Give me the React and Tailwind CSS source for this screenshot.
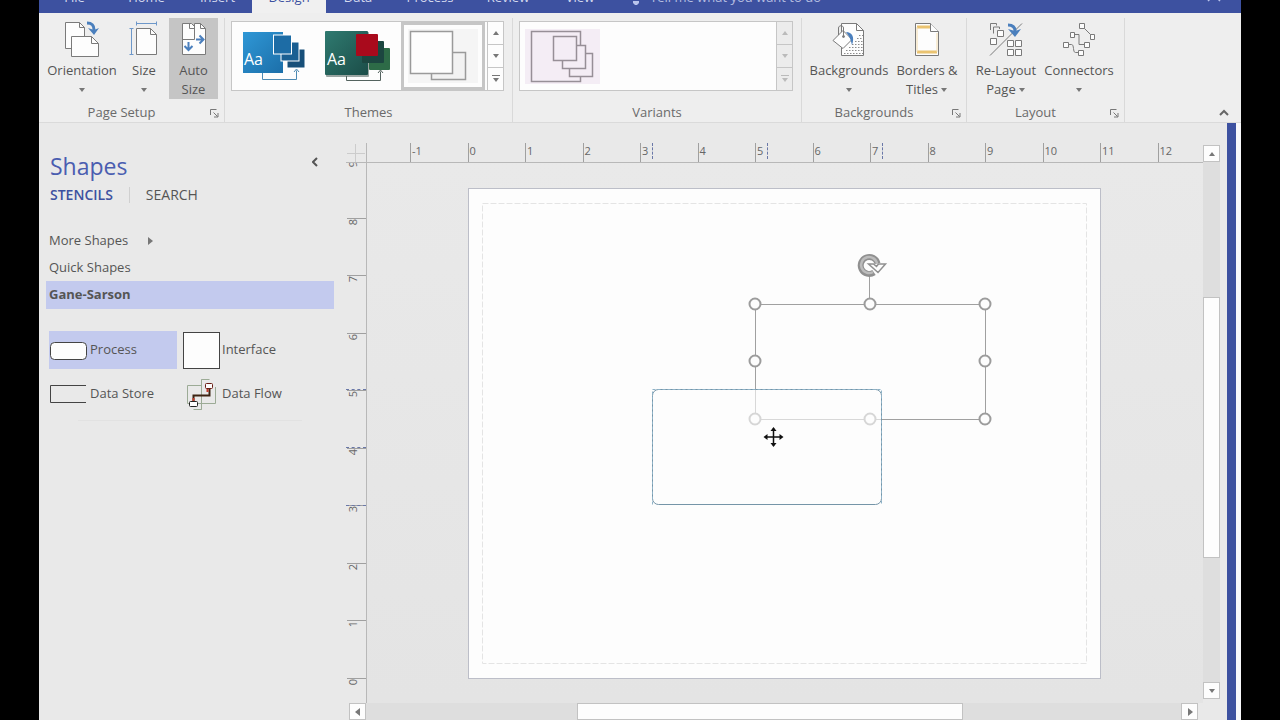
function Caret({ dir = 'down', className = 'fill-[#777777]' }) {
  const points = {
    down: '1,2 7,2 4,6',
    up: '1,6 7,6 4,2',
    right: '2,0 7,4 2,8',
    left: '6,0 1,4 6,8',
  }
  return (
    <svg className={`w-2 h-2 shrink-0 ${className}`} viewBox="0 0 8 8">
      <polygon points={points[dir]} />
    </svg>
  )
}

function OrientationIcon() {
  return (
    <svg width="36" height="40" viewBox="0 0 36 40" fill="none" stroke="#7a7a7a">
      <path d="M1.500 4.500h14l5 5v21h-19z" fill="#fdfdfd" />
      <path d="M15.500 4.500v5h5" />
      <path d="M7.500 18.500h20l7 7v13h-27z" fill="#fdfdfd" />
      <path d="M27.500 18.500v7h7" />
      <path d="M23 5c5 0 7 2 7 7" stroke="#4a7fbd" strokeWidth="3" />
      <path d="M24 10l6 2 5-2-5 7z" fill="#4a7fbd" stroke="none" />
    </svg>
  )
}

function SizeIcon() {
  return (
    <svg width="30" height="40" viewBox="0 0 30 40" fill="none" stroke="#7a7a7a">
      <path d="M7.500 10.500h14l6 6v20h-20z" fill="#fdfdfd" />
      <path d="M21.500 10.500v6h6" />
      <path d="M7 5.500h21M7.500 3.500v4M27.500 3.500v4M2.500 10v27M.5 10.500h4M.5 36.500h4" stroke="#6d97c9" />
    </svg>
  )
}

function AutoSizeIcon() {
  return (
    <svg width="28" height="40" viewBox="0 0 28 40" fill="none" stroke="#7a7a7a">
      <path d="M2.500 5.500h9l3 3v-3h6l5 5v26h-23z" fill="#fdfdfd" />
      <path d="M9.500 5.500v5h5M14.500 8v13.500h-12M20.500 5.500v5h5" />
      <path d="M16 21.500h7M19.500 17.500l4 4-4 4M8.500 24v7M4.500 28l4 4 4-4" stroke="#4a7fbd" strokeWidth="2" />
    </svg>
  )
}

function BackgroundsIcon() {
  return (
    <svg width="34" height="40" viewBox="0 0 34 40" fill="none" stroke="#7a7a7a">
      <path d="M9.500 5.500h15l7 7v25h-22z" fill="#fdfdfd" />
      <path d="M24.500 5.500v7h7" />
      <path
        d="M12 35.500h19M14 32.500h17M17 29.500h14M20 26.500h11M23 23.500h8M25 20.500h6M27 17.500h4"
        stroke="#8c8c8c"
        strokeDasharray="1.500 1.500"
      />
      <path d="M1 22.500l10-10 9 9-9 9z" fill="#fdfdfd" />
      <path d="M11.500 18v-8c0-3-5-3-5 0v7" />
      <circle cx="11.500" cy="18.500" r="1" fill="#7a7a7a" />
      <path d="M14 14c6 0 9 5 6 13-1-3-1-7-6-13z" fill="#4a7fbd" stroke="none" />
    </svg>
  )
}

function BordersIcon() {
  return (
    <svg width="26" height="40" viewBox="0 0 26 40" fill="none" stroke="#7a7a7a">
      <path d="M1.500 5.500h15l8 8v24h-23z" fill="#fdfdfd" />
      <path d="M3 9h13M3 34h20" stroke="#eac371" strokeWidth="3" />
      <path d="M3 9v25M23 15v19" stroke="#f3dcae" />
      <path d="M16.500 5.500v8h8" fill="#fdfdfd" />
    </svg>
  )
}

function RelayoutIcon() {
  return (
    <svg width="34" height="40" viewBox="0 0 34 40" fill="none" stroke="#7a7a7a">
      <path d="M1.500 12v-6.500h6v2M4.500 15.500v-6.500h6v2" />
      <path d="M8.500 12.500h6v6h-6zM1.500 20.500h6v6h-6z" fill="#fdfdfd" />
      <path d="M1 37.500l32-32" />
      <path d="M18.500 22.500h6v6h-6zM26.500 22.500h6v6h-6zM18.500 31.500h6v6h-6zM26.500 31.500h6v6h-6z" fill="#fdfdfd" />
      <path d="M19 7c5 0 7 2 7 6" stroke="#4a7fbd" strokeWidth="3" />
      <path d="M19 11l7 2 6-2-6 8z" fill="#4a7fbd" stroke="none" />
    </svg>
  )
}

function ConnectorsIcon() {
  return (
    <svg width="34" height="40" viewBox="0 0 34 40" fill="none" stroke="#7a7a7a">
      <path d="M22 10l7 7M12 16.500h5v10h5M6 26.500h3.500c3 0 1 8 4 8h3" />
      <path
        d="M17.500 5.500h5v5h-5zM28.500 16.500h4v5h-4zM8.500 14.500h4v5h-4zM22.500 24.500h5v5h-5zM1.500 24.500h5v5h-5zM16.500 32.500h5v5h-5z"
        fill="#fdfdfd"
      />
    </svg>
  )
}

function BlueTheme() {
  return (
    <svg width="66" height="54" viewBox="0 0 66 54">
      <defs>
        <linearGradient id="blue" x1="0" y1="0" x2="1" y2="1">
          <stop offset="0" stopColor="#2f97d6" />
          <stop offset="1" stopColor="#1c6fa9" />
        </linearGradient>
      </defs>
      <rect x="1" y="3" width="40" height="41" fill="url(#blue)" />
      <path d="M20.500 44v6.500h34v-9M52 43l2.500-3 2.500 3" fill="none" stroke="#4d8ab3" />
      <rect x="45" y="20" width="18" height="19" fill="#174f79" stroke="#fff" />
      <rect x="39" y="13" width="18" height="19" fill="#1a5f92" stroke="#fff" />
      <rect x="31.500" y="6" width="18" height="19" fill="#1d6ca5" stroke="#fff" />
      <text x="2" y="36" className="fill-white text-base">Aa</text>
    </svg>
  )
}

function GreenTheme() {
  return (
    <svg width="70" height="54" viewBox="0 0 70 54">
      <defs>
        <linearGradient id="green" x1="0" y1="0" x2="1" y2="1">
          <stop offset="0" stopColor="#2f7a70" />
          <stop offset="1" stopColor="#1b4d48" />
        </linearGradient>
      </defs>
      <rect x="4" y="3" width="43" height="45" rx="1" fill="#9aa5a2" />
      <rect x="3" y="2" width="43" height="44" rx="1" fill="url(#green)" />
      <path d="M24.500 47v4.500h34v-9M56 44l2.500-3 2.500 3" fill="none" stroke="#54635f" />
      <rect x="47" y="19" width="21" height="22" rx="1" fill="#2d6b47" />
      <rect x="40" y="12" width="22" height="22" rx="1" fill="#1c4640" />
      <rect x="34" y="5" width="22" height="22" rx="1" fill="#a90a1c" />
      <text x="5" y="36" className="fill-white text-base">Aa</text>
    </svg>
  )
}

function PlainTheme() {
  return (
    <svg width="70" height="54" viewBox="0 0 70 54" stroke="#9a9a9a" strokeWidth="1.500" fill="#fdfdfd">
      <rect x="23.500" y="23.500" width="34" height="27" fill="#f2f2f2" />
      <rect x="2.500" y="2.500" width="42" height="42" />
    </svg>
  )
}

function VariantPreview() {
  return (
    <svg width="75" height="55" viewBox="0 0 75 55" stroke="#978f97" strokeWidth="1.500" fill="#f4edf5">
      <rect width="75" height="55" stroke="none" />
      <rect x="6.500" y="2.500" width="49" height="50" />
      <rect x="44.500" y="24.500" width="23" height="23" />
      <rect x="37.500" y="16.500" width="23" height="23" />
      <rect x="28.500" y="7.500" width="23" height="24" />
    </svg>
  )
}

function RibbonGroup({ label, launcher, className, children }) {
  return (
    <section className={`flex flex-col h-[104px] border-r border-[#d9d9d9] ${className}`}>
      <div className="flex h-[81px]">{children}</div>
      <div className="flex items-center mt-[5px] h-[18px] text-[#6a6a6a]">
        <h2 className="flex-1 text-center">{label}</h2>
        {launcher && (
          <button aria-label={`${label} options`} className="w-5 flex justify-center">
            <svg width="9" height="9" viewBox="0 0 9 9" fill="none" stroke="#777777">
              <path d="M.5 6v-5.500h6M3.500 3.500l4 4M8 4v4h-4" />
            </svg>
          </button>
        )}
      </div>
    </section>
  )
}

function RibbonButton({ icon, line1, line2, menu, active, className }) {
  return (
    <button
      className={`h-[81px] flex flex-col items-center shrink-0 leading-[19px] whitespace-nowrap ${active ? 'bg-[#c5c5c5]' : ''} ${className}`}
    >
      <span className="h-[43px]">{icon}</span>
      <span>{line1}</span>
      <span className="flex items-center gap-0.5 h-[19px]">
        {line2}
        {menu && <Caret />}
      </span>
    </button>
  )
}

function Gallery({ disabled, children }) {
  return (
    <div className="flex flex-1 h-[70px] mt-[3px] ml-1.5 mr-2 border border-[#c6c6c6] bg-[#fdfdfd]">
      <div className="flex flex-1 items-center">{children}</div>
      <div className={`flex flex-col w-4 border-l border-[#c6c6c6] divide-y divide-[#c6c6c6] ${disabled ? 'bg-[#ececec]' : ''}`}>
        <button aria-label="Scroll up" disabled={disabled} className="flex-1 flex items-center justify-center">
          <Caret dir="up" className={disabled ? 'fill-[#bbbbbb]' : 'fill-[#777777]'} />
        </button>
        <button aria-label="Scroll down" disabled={disabled} className="flex-1 flex items-center justify-center">
          <Caret className={disabled ? 'fill-[#bbbbbb]' : 'fill-[#777777]'} />
        </button>
        <button aria-label="More" disabled={disabled} className="flex-1 flex flex-col items-center justify-center">
          <span className={`w-2 h-px ${disabled ? 'bg-[#bbbbbb]' : 'bg-[#777777]'}`}></span>
          <Caret className={disabled ? 'fill-[#bbbbbb]' : 'fill-[#777777]'} />
        </button>
      </div>
    </div>
  )
}

function TabBar() {
  const tab = 'h-8 shrink-0 text-center'
  return (
    <nav className="flex items-end h-[13px] overflow-hidden bg-[#3d51a0] text-[#d5daef] leading-8">
      <button className={`${tab} w-[71px]`}>File</button>
      <button className={`${tab} w-[73px]`}>Home</button>
      <button className={`${tab} w-[69px]`}>Insert</button>
      <button className={`${tab} w-[74px] bg-[#f0f0f0] text-[#3d51a0]`}>Design</button>
      <button className={`${tab} w-[64px]`}>Data</button>
      <button className={`${tab} w-[80px]`}>Process</button>
      <button className={`${tab} w-[76px]`}>Review</button>
      <button className={`${tab} w-[68px]`}>View</button>
      <button className="h-8 ml-4 flex items-center gap-2 text-[#b5bee0]">
        <svg width="12" height="18" viewBox="0 0 12 18" fill="#b9c4ec">
          <path d="M6 1a5 5 0 0 0-3 9v2h6v-2a5 5 0 0 0-3-9zM3 13h6v2l-2 2H5l-2-2z" />
        </svg>
        Tell me what you want to do
      </button>
      <button aria-label="Account" className="h-8 ml-auto mr-5 flex items-center">
        <svg width="14" height="18" viewBox="0 0 14 18" fill="none" stroke="#b9c4ec" strokeWidth="1.500">
          <circle cx="7" cy="4" r="3" />
          <path d="M1 13l3-3h6l3 3" />
        </svg>
      </button>
    </nav>
  )
}

function Ribbon() {
  return (
    <div className="flex h-[110px] pt-[5px] bg-[#eeeeee] border-b border-[#dadada]">
      <RibbonGroup label="Page Setup" launcher className="w-[186px]">
        <div className="flex gap-[7px] pl-1.5">
          <RibbonButton icon={<OrientationIcon />} line1="Orientation" menu className="w-[74px]" />
          <RibbonButton icon={<SizeIcon />} line1="Size" menu className="w-9" />
          <RibbonButton icon={<AutoSizeIcon />} line1="Auto" line2="Size" active className="w-[49px]" />
        </div>
      </RibbonGroup>
      <RibbonGroup label="Themes" className="w-[288px]">
        <Gallery>
          <button aria-label="Blue theme" className="ml-2.5">
            <BlueTheme />
          </button>
          <button aria-label="Green theme" className="ml-3.5">
            <GreenTheme />
          </button>
          <button aria-label="Plain theme" className="ml-auto mr-0.5 p-1 bg-[#fdfdfd] border-3 border-[#c6c6c6]">
            <span className="block bg-[#f5f5f5]">
              <PlainTheme />
            </span>
          </button>
        </Gallery>
      </RibbonGroup>
      <RibbonGroup label="Variants" className="w-[289px]">
        <Gallery disabled>
          <button aria-label="Variant 1" className="ml-[5px]">
            <VariantPreview />
          </button>
        </Gallery>
      </RibbonGroup>
      <RibbonGroup label="Backgrounds" launcher className="w-[165px]">
        <div className="flex pl-1">
          <RibbonButton icon={<BackgroundsIcon />} line1="Backgrounds" menu className="w-[86px]" />
          <RibbonButton icon={<BordersIcon />} line1="Borders &" line2="Titles" menu className="w-[70px]" />
        </div>
      </RibbonGroup>
      <RibbonGroup label="Layout" launcher className="w-[158px]">
        <div className="flex pl-[3px]">
          <RibbonButton icon={<RelayoutIcon />} line1="Re-Layout" line2="Page" menu className="w-[72px]" />
          <RibbonButton icon={<ConnectorsIcon />} line1="Connectors" menu className="w-[74px]" />
        </div>
      </RibbonGroup>
      <button aria-label="Collapse ribbon" className="self-end ml-auto mr-3 mb-1.5">
        <svg width="10" height="7" viewBox="0 0 10 7" fill="none" stroke="#666666" strokeWidth="2">
          <path d="M1 6l4-4 4 4" />
        </svg>
      </button>
    </div>
  )
}

function ShapesPanel() {
  const item = 'flex items-center h-[38px] text-left'
  return (
    <aside className="w-[307px] shrink-0 pt-7 pl-[7px] pr-3">
      <div className="flex justify-between h-[30px] pl-1 pr-[15px]">
        <h1 className="text-[23px] leading-[30px] text-[#4a5db0]">Shapes</h1>
        <button aria-label="Minimize shapes window" className="self-start mt-1.5">
          <svg width="7" height="10" viewBox="0 0 7 10" fill="none" stroke="#555555" strokeWidth="2">
            <path d="M5 1l-4 4 4 4" />
          </svg>
        </button>
      </div>
      <div className="flex items-center h-7 pl-1 text-sm">
        <button className="font-semibold text-[#3d51a0]">STENCILS</button>
        <span className="w-px h-4 mx-4 bg-[#d0d0d0]"></span>
        <button>SEARCH</button>
      </div>
      <ul className="mt-[18px]">
        <li>
          <button className="flex items-center gap-[18px] h-[27px] pl-[3px]">
            More Shapes <Caret dir="right" />
          </button>
        </li>
        <li>
          <button className="h-[27px] pl-[3px]">Quick Shapes</button>
        </li>
        <li>
          <button className="w-full h-7 pl-[3px] text-left font-bold bg-[#c3caee]">Gane-Sarson</button>
        </li>
      </ul>
      <div className="grid grid-cols-[128px_128px] gap-1.5 mt-[22px] pl-[3px]">
        <button className={`${item} gap-[3px] bg-[#c3caee]`}>
          <svg width="38" height="38" viewBox="0 0 38 38" fill="#fdfdfd" stroke="#444444">
            <rect x="1.500" y="11.500" width="36" height="17" rx="4" />
          </svg>
          Process
        </button>
        <button className={`${item} gap-px`}>
          <svg width="38" height="38" viewBox="0 0 38 38" fill="#fdfdfd" stroke="#444444">
            <rect x=".5" y="1.500" width="36" height="36" />
          </svg>
          Interface
        </button>
        <button className={`${item} gap-[3px]`}>
          <svg width="38" height="38" viewBox="0 0 38 38" fill="none" stroke="#444444">
            <path d="M37 10.500h-35.500v17h35.500" />
          </svg>
          Data Store
        </button>
        <button className={`${item} gap-px`}>
          <svg width="38" height="38" viewBox="0 0 38 38" fill="none">
            <path d="M4.500 10.500h14v-6h8M4.500 10.500v18h14v6h-8M18.500 4.500v30M32.500 12v16.500h-14" stroke="#9cab96" />
            <path d="M26.500 13v7.500h-16v6" stroke="#3d2412" strokeWidth="2" />
            <path d="M24.500 13v4M10.500 23v4" stroke="#c23b2b" strokeWidth="2" />
            <rect x="22.500" y="8.500" width="7" height="5" rx="1" fill="#fdfdfd" stroke="#6b1d14" />
            <rect x="6.500" y="26.500" width="8" height="5" rx="1" fill="#fdfdfd" stroke="#222222" />
          </svg>
          Data Flow
        </button>
      </div>
      <div className="mt-[7px] mx-8 h-px bg-[#e2e2e2]"></div>
    </aside>
  )
}

function HorizontalRuler() {
  const inches = [-1, 0, 1, 2, 3, 4, 5, 6, 7, 8, 9, 10, 11, 12]
  return (
    <div className="relative overflow-hidden border-b border-[#b8b8b8] text-[11px] leading-4 text-[#666666]">
      <div className="grid grid-cols-14 w-[805px] h-full ml-[43px]">
        {inches.map((n) => (
          <span key={n} className="pl-px border-l border-[#a0a0a0]">{n}</span>
        ))}
      </div>
      <span className="absolute top-0 left-[285px] h-4 border-l border-dashed border-[#6a78a8]"></span>
      <span className="absolute top-0 left-[400px] h-4 border-l border-dashed border-[#6a78a8]"></span>
      <span className="absolute top-0 left-[515px] h-4 border-l border-dashed border-[#6a78a8]"></span>
    </div>
  )
}

function VerticalRuler() {
  const inches = [9, 8, 7, 6, 5, 4, 3, 2, 1, 0]
  return (
    <div className="relative overflow-hidden border-r border-[#b8b8b8] text-[11px] leading-3 text-[#666666]">
      <div className="grid grid-rows-10 h-[575px] -mt-[3px]">
        {inches.map((n) => (
          <div key={n} className="ml-px border-t border-[#a0a0a0]">
            <span className="block w-3 rotate-180 [writing-mode:vertical-rl]">{n}</span>
          </div>
        ))}
      </div>
      <span className="absolute left-0 top-[226px] w-5 border-t border-dashed border-[#6a78a8]"></span>
      <span className="absolute left-0 top-[284px] w-5 border-t border-dashed border-[#6a78a8]"></span>
      <span className="absolute left-0 top-[342px] w-5 border-t border-dashed border-[#6a78a8]"></span>
    </div>
  )
}

function Drawing() {
  const handles = [
    [287, 116],
    [402, 116],
    [517, 116],
    [287, 173],
    [517, 173],
    [287, 231],
    [402, 231],
    [517, 231],
  ]
  return (
    <svg className="absolute -top-px -left-px" width="633" height="490" viewBox="0 0 633 490" fill="none">
      <rect x="14.500" y="15.500" width="604" height="460" stroke="#e4e4e4" strokeDasharray="6 2" />

      {/* selected process */}
      <rect x="287.500" y="116.500" width="230" height="115" stroke="#a0a0a0" />
      <path d="M401.500 88v24" stroke="#a0a0a0" />
      {handles.map(([x, y]) => (
        <circle key={`${x}-${y}`} cx={x} cy={y} r="5.500" fill="#fdfdfd" stroke="#9c9c9c" strokeWidth="2" />
      ))}

      {/* rotation handle */}
      <path d="M406 84.500a8.500 8.500 0 1 1 3.500-9" stroke="#909090" strokeWidth="6" />
      <path d="M405 84a8 8 0 1 1 4-8" stroke="#bcbcbc" strokeWidth="2.500" />
      <path d="M400.500 76h5l3 2.500 2-2.500h7l-7.500 8.500z" fill="#fdfdfd" stroke="#909090" strokeWidth="1.500" />

      {/* copy being dragged */}
      <rect x="184.500" y="201.500" width="229" height="115" rx="6" fill="#fdfdfd" fillOpacity="0.6" stroke="#7595a8" />
      <path d="M184.500 316.500v-115h229v115" stroke="#8fb3c8" strokeDasharray="3 2" />

      {/* move cursor */}
      <path d="M297 249h17M305.500 240.500v17" stroke="#111111" strokeWidth="1.500" />
      <path
        d="M305.500 239l3 4h-6zM305.500 259l3-4h-6zM295.500 249l4-3v6zM315.500 249l-4-3v6z"
        fill="#111111"
      />
    </svg>
  )
}

function Workspace() {
  const arrow = 'flex items-center justify-center shrink-0 bg-[#fdfdfd] border border-[#c2c2c2]'
  return (
    <main className="flex-1 min-w-0 grid grid-cols-[21px_1fr_17px] grid-rows-[20px_1fr_17px] pt-5 pr-[7px]">
      <div className="flex items-center justify-center border-r border-b border-[#b8b8b8]">
        <svg width="18" height="18" viewBox="0 0 18 18" stroke="#cccccc">
          <path d="M0 9.500h18M8.500 0v18" />
        </svg>
      </div>
      <HorizontalRuler />
      <div className="row-span-2 flex flex-col pt-0.5 pb-1 bg-[#dedede] bg-clip-content">
        <button aria-label="Scroll up" className={`${arrow} h-[17px]`}>
          <Caret dir="up" />
        </button>
        <div className="flex-[136]"></div>
        <div className="flex-[260] bg-[#fdfdfd] border border-[#c2c2c2]"></div>
        <div className="flex-[125]"></div>
        <button aria-label="Scroll down" className={`${arrow} h-[17px]`}>
          <Caret />
        </button>
      </div>
      <VerticalRuler />
      <div className="overflow-hidden bg-linear-to-b from-[#e9e9e9] to-[#e4e4e4]">
        <div className="relative w-[633px] h-[491px] mt-[25px] ml-[101px] bg-[#fdfdfd] border border-[#bcbec8]">
          <Drawing />
        </div>
      </div>
      <div className="col-span-2 flex pl-[3px] mr-[5px]">
        <button aria-label="Scroll left" className={`${arrow} w-[17px]`}>
          <Caret dir="left" />
        </button>
        <div className="flex-1 flex bg-[#dedede]">
          <div className="flex-[212]"></div>
          <div className="flex-[384] bg-[#fdfdfd] border border-[#c2c2c2]"></div>
          <div className="flex-[219]"></div>
        </div>
        <button aria-label="Scroll right" className={`${arrow} w-[17px]`}>
          <Caret dir="right" />
        </button>
      </div>
    </main>
  )
}

function App() {
  return (
    <div className="h-screen px-[39px] bg-black">
      <div className="flex flex-col h-full overflow-hidden bg-[#e9e9e9] font-['Open_Sans','Noto_Sans',sans-serif] text-[13px] text-[#555555]">
        <TabBar />
        <Ribbon />
        <div className="flex flex-1 min-h-0">
          <ShapesPanel />
          <Workspace />
          <div className="w-3.5 shrink-0 bg-[#3d51a0] border-r-5 border-[#f8f8fb]"></div>
        </div>
      </div>
    </div>
  )
}

export default App
